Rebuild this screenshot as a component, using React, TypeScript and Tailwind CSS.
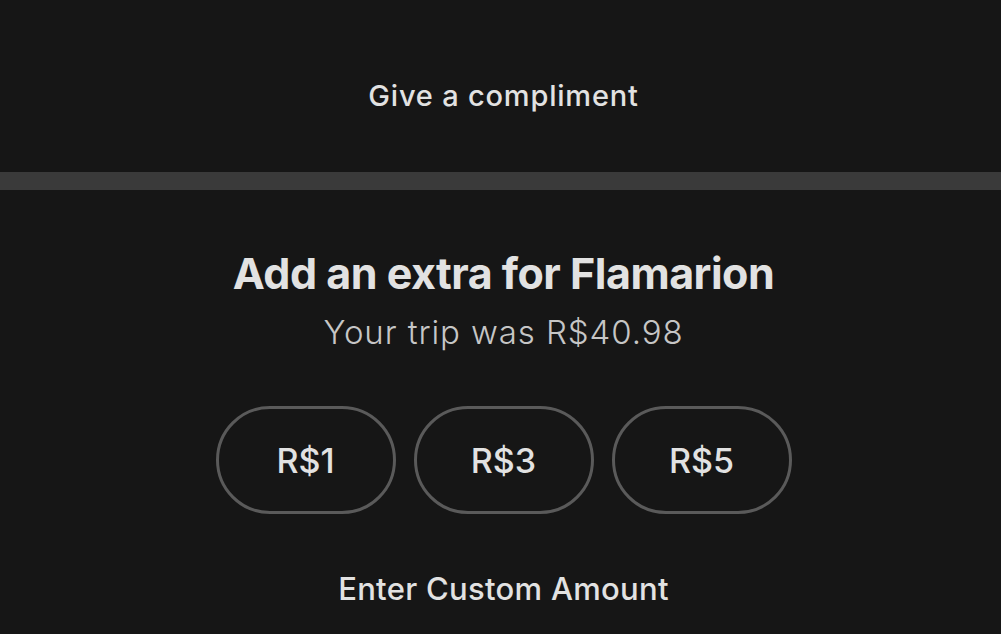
import React from 'react';

const amounts = ['R$1', 'R$3', 'R$5'];

export default function App() {
  return (
    <div
      className="w-[1001px] h-[634px] overflow-hidden bg-[#161616] text-[#e2e2e2] flex flex-col"
      style={{ fontFamily: 'Inter, "Open Sans", sans-serif' }}
    >
      {/* compliment */}
      <div className="h-[172px] flex items-center justify-center pt-[18px] pl-[6px]">
        <button className="text-[29px] font-medium leading-none tracking-[0.8px]">Give a compliment</button>
      </div>

      <div className="h-[18px] bg-[#3a3a3a]" />

      {/* tip */}
      <div className="flex flex-col items-center pt-[62px] pl-[6px]">
        <h1 className="text-[43px] font-bold leading-none tracking-[-0.5px]">Add an extra for Flamarion</h1>
        <p className="mt-[21px] text-[33px] font-light leading-none tracking-[0.9px] text-[#c6c6c6]">
          Your trip was R$40.98
        </p>

        <div className="mt-[57px] flex gap-[18px]">
          {amounts.map((a) => (
            <button
              key={a}
              className="w-[180px] h-[108px] rounded-full border-[3px] border-[#5a5a5a] flex items-center justify-center text-[34px] font-medium"
            >
              {a}
            </button>
          ))}
        </div>

        <button className="mt-[59px] text-[31px] font-medium leading-none tracking-[0.3px]">Enter Custom Amount</button>
      </div>
    </div>
  );
}
